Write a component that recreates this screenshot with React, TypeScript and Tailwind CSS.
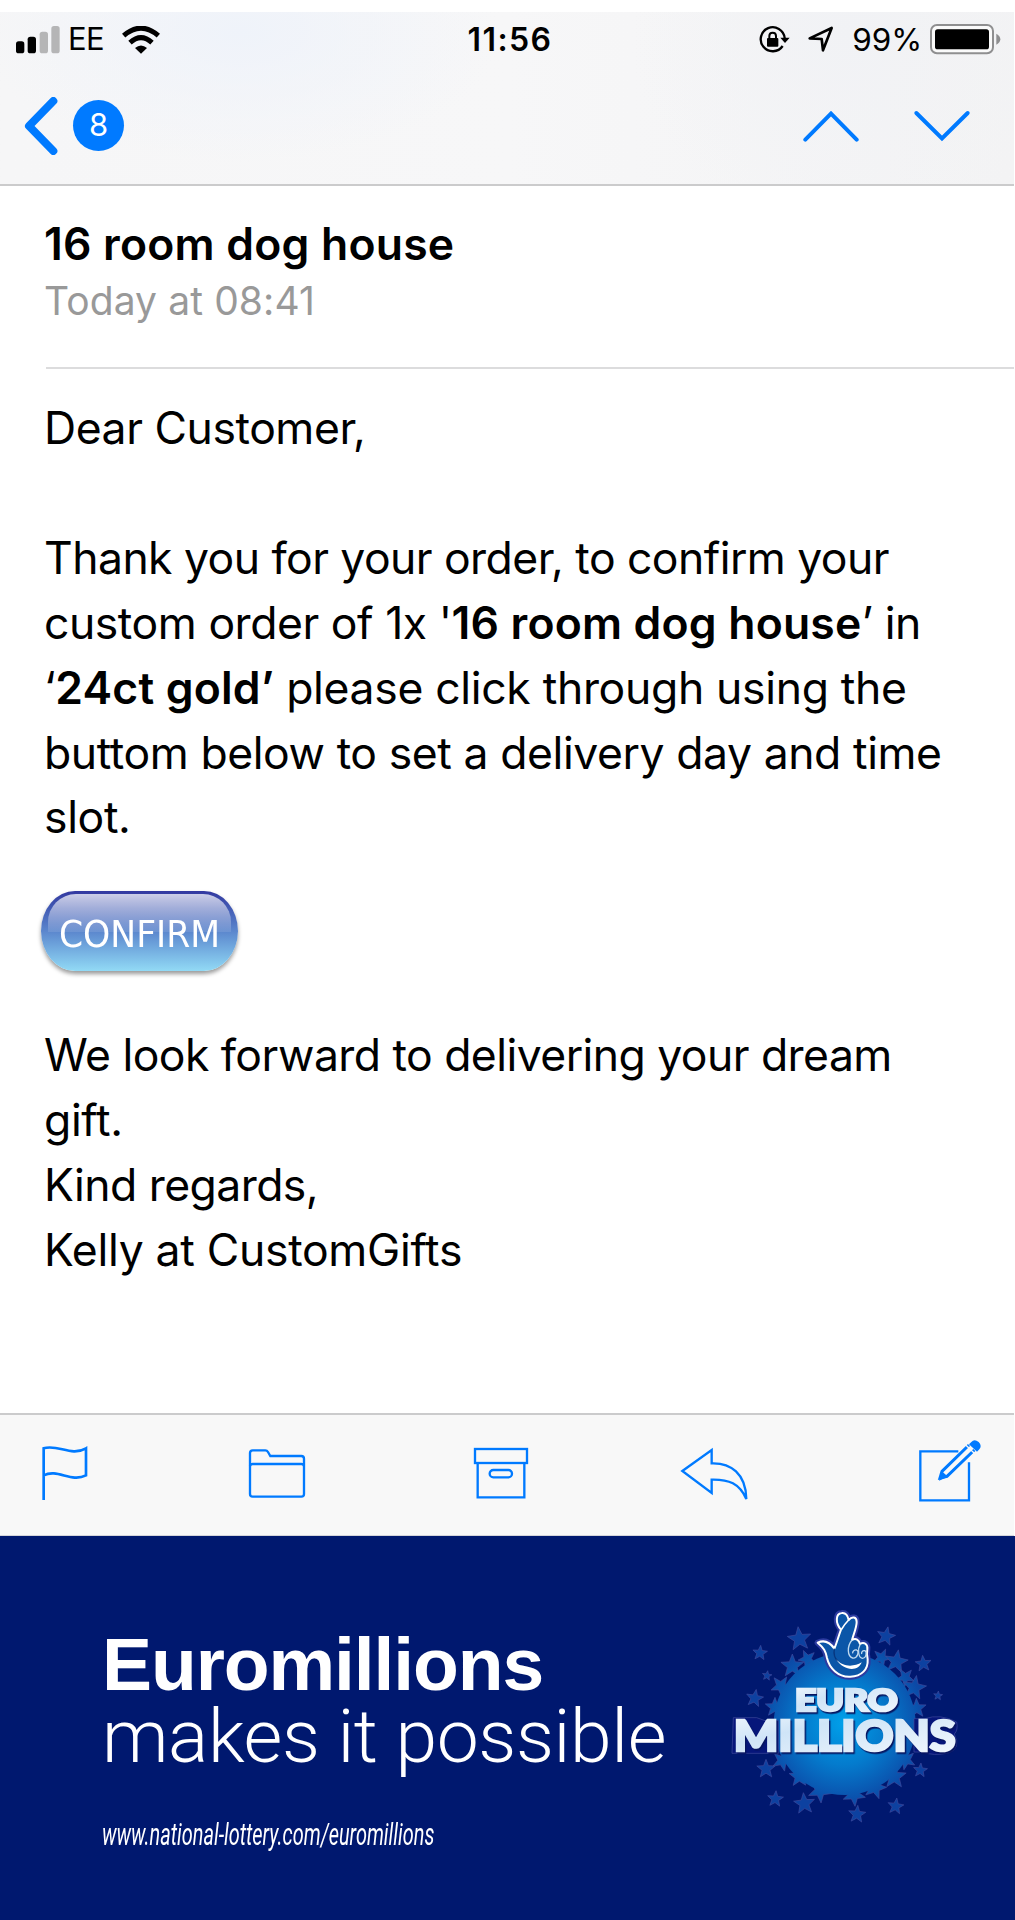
import type { ReactNode } from "react";

const BLUE = "#007aff";

function SignalBars() {
  return (
    <svg width="44" height="28" viewBox="0 0 132 84">
      <rect x="0" y="46" width="25" height="36" rx="8" fill="#000" />
      <rect x="35" y="32" width="25" height="50" rx="8" fill="#000" />
      <rect x="71" y="17" width="25" height="65" rx="8" fill="#b5b5b6" />
      <rect x="106" y="0" width="25" height="82" rx="8" fill="#b5b5b6" />
    </svg>
  );
}

function WifiIcon() {
  return (
    <svg width="38" height="28" viewBox="0 0 114 84" fill="none" stroke="#000">
      <path d="M5 29 Q57 -16 109 29" strokeWidth="15" />
      <path d="M24 50 Q57 20 90 50" strokeWidth="15" />
      <path d="M39 66 Q57 51 75 66 L57 83 Z" fill="#000" stroke="none" />
    </svg>
  );
}

function RotationLock() {
  return (
    <svg width="31" height="28" viewBox="0 0 93 84" fill="none">
      <path d="M71 60 A36 36 0 1 1 77 36" stroke="#000" strokeWidth="7" />
      <path d="M64 35 H92 L78 51 Z" fill="#000" />
      <rect x="24" y="36" width="34" height="26" rx="3" fill="#000" />
      <path d="M31 40 V30 Q31 20 41 20 Q51 20 51 30 V40" stroke="#000" strokeWidth="6" />
    </svg>
  );
}

function LocationArrow() {
  return (
    <svg width="26" height="27" viewBox="0 0 78 81">
      <path
        d="M5 37 L71 6 L45 73 L41 39 Z"
        fill="none"
        stroke="#000"
        strokeWidth="8"
        strokeLinejoin="round"
      />
    </svg>
  );
}

function Battery() {
  return (
    <svg width="71" height="31" viewBox="0 0 213 93" className="shrink-0">
      <rect x="3" y="3" width="186" height="85" rx="18" fill="#fafafa" stroke="#8f8f90" strokeWidth="6" />
      <rect x="15" y="16" width="162" height="60" rx="8" fill="#000" />
      <path d="M199 29 Q211 36 211 46 Q211 56 199 62 Z" fill="#8f8f90" />
    </svg>
  );
}

function StatusBar() {
  return (
    <div className="grid h-[55px] grid-cols-[1fr_auto_1fr] items-center text-black">
      <div className="flex items-center pl-4">
        <SignalBars />
        <span className="ml-2 text-[31px] tracking-[-0.6px]">EE</span>
        <span className="ml-[18px]">
          <WifiIcon />
        </span>
      </div>
      <span className="relative left-[3px] text-[32px] font-semibold tracking-[1.4px]">11:56</span>
      <div className="flex items-center justify-end pr-[13px]">
        <RotationLock />
        <span className="ml-[18px]">
          <LocationArrow />
        </span>
        <span className="mr-2 ml-[18px] text-[31.5px] tracking-[-0.1px]">99%</span>
        <Battery />
      </div>
    </div>
  );
}

function NavBar() {
  return (
    <div className="flex h-[117px] items-center">
      <svg className="ml-[24px]" width="36" height="58" viewBox="0 0 108 174">
        <path
          d="M88 12 L15 87 L88 162"
          fill="none"
          stroke={BLUE}
          strokeWidth="24"
          strokeLinecap="round"
          strokeLinejoin="round"
        />
      </svg>
      <div className="ml-[13px] flex h-[51px] w-[51px] items-center justify-center rounded-full bg-[#007aff] text-[31px] text-white">
        8
      </div>
      <div className="mr-[43px] ml-auto flex gap-[53px]">
        <svg width="58" height="32" viewBox="0 0 174 96">
          <path d="M10 89 L87 11 L164 89" fill="none" stroke={BLUE} strokeWidth="12" strokeLinecap="round" />
        </svg>
        <svg width="58" height="32" viewBox="0 0 174 96">
          <path d="M10 9 L87 85 L164 9" fill="none" stroke={BLUE} strokeWidth="12" strokeLinecap="round" />
        </svg>
      </div>
    </div>
  );
}

function Line({ className = "", children }: { className?: string; children: ReactNode }) {
  return <span className={`block whitespace-nowrap ${className}`}>{children}</span>;
}

function ConfirmButton() {
  return (
    <button className="relative ml-[-3px] flex h-[80px] w-[197px] items-center justify-center rounded-[34px/40px] bg-linear-to-b from-[#3338a0] via-[#5b86cd] to-[#92daf5] shadow-[0_3px_4px_rgba(0,0,0,0.4)]">
      <span className="absolute top-[3px] right-[7px] left-[7px] h-[38px] rounded-t-[28px] bg-linear-to-b from-white/75 to-white/10" />
      <span className="relative top-[3px] scale-x-[0.91] font-['DejaVu_Sans',sans-serif] text-[38px] text-white">
        CONFIRM
      </span>
    </button>
  );
}

function Toolbar() {
  return (
    <div className="mr-px flex h-[123px] items-start border-t-2 border-b border-t-[#cbcbcc] border-b-[#d5d5da] bg-[#f8f8f8]">
      <svg className="mt-[30px] ml-[41px]" width="48" height="56" viewBox="0 0 144 168" fill="none" stroke={BLUE} strokeWidth="8">
        <path d="M8 165 V10 C50 -4 90 36 135 10 V91 C90 114 50 70 8 91" />
      </svg>
      <svg className="mt-[33px] ml-[159px]" width="58" height="51" viewBox="0 0 174 153" fill="none" stroke={BLUE} strokeWidth="7">
        <path d="M6 138 V15 Q6 7 14 7 H52 Q57 7 60 12 L67 24 H160 Q168 24 168 32 V138 Q168 146 160 146 H14 Q6 146 6 138 Z" />
        <path d="M6 54 Q7 48 14 48 H160 Q167 48 168 54" />
      </svg>
      <svg className="mt-[32px] ml-[167px]" width="56" height="53" viewBox="0 0 168 159" fill="none" stroke={BLUE} strokeWidth="7">
        <rect x="6" y="6" width="156" height="42" />
        <path d="M14 48 V151 H154 V48" />
        <rect x="50" y="69" width="67" height="22" rx="11" />
      </svg>
      <svg className="mt-[32px] ml-[151px]" width="69" height="54" viewBox="0 0 207 162" fill="none" stroke={BLUE} strokeWidth="7">
        <path d="M7 72 L95 9 V49 C152 47 198 80 199 156 C178 109 147 97 95 98 V138 Z" />
      </svg>
      <svg className="mt-[24px] ml-[169px]" width="65" height="66" viewBox="0 0 195 198" fill="none" stroke={BLUE} strokeWidth="7">
        <path d="M121 37 H7 V184 H153 V70" />
        <path d="M153 18 L72 97 L66 117 L87 112 L169 33" strokeWidth="9" />
        <path d="M70 95 L90 113 L63 125 Z" fill={BLUE} stroke="none" />
        <path d="M160 9 Q169 -2 182 9 Q193 20 184 31 L177 38 L153 16 Z" fill={BLUE} stroke="none" />
        <path d="M144 19 L172 46" stroke="#f8f8f8" strokeWidth="4" />
      </svg>
    </div>
  );
}

function starPoints(cx: number, cy: number, r: number, turn: number) {
  return Array.from({ length: 10 }, (_, i) => {
    const radius = i % 2 ? r * 0.43 : r;
    const a = ((turn - 90 + i * 36) * Math.PI) / 180;
    return `${(cx + radius * Math.cos(a)).toFixed(1)},${(cy + radius * Math.sin(a)).toFixed(1)}`;
  }).join(" ");
}

// x, y, radius, rotation
const looseStars = [
  [268, 147, 37, -6], [150, 189, 23, 5], [171, 257, 15, 8], [134, 325, 27, 10],
  [528, 139, 29, 12], [640, 221, 25, -5], [684, 317, 14, 5], [168, 537, 29, 0],
  [196, 627, 25, 5], [283, 641, 33, -5], [441, 673, 27, 5], [557, 649, 25, 8], [631, 541, 22, 5],
];

const rimStars = [
  [247, 228, 36, 0], [292, 207, 28, -25], [213, 288, 32, -40], [194, 352, 30, -70],
  [515, 203, 28, 25], [559, 215, 36, 10], [586, 262, 28, 40], [613, 293, 37, 10],
  [620, 355, 30, 70], [217, 512, 32, -120], [268, 560, 32, -145], [330, 602, 37, 175],
  [432, 614, 35, 175], [495, 593, 35, 160], [553, 560, 37, 145], [588, 510, 30, 120],
];

function EuroMillionsLogo() {
  const lettering = {
    lengthAdjust: "spacingAndGlyphs" as const,
    fontFamily: "Lato, sans-serif",
    fontWeight: 900,
    fill: "url(#letters)",
    stroke: "url(#letters)",
    strokeWidth: 8,
  };

  return (
    <svg width="270" height="250" viewBox="0 0 810 750">
      <defs>
        <radialGradient id="globe" gradientUnits="userSpaceOnUse" cx="400" cy="400" r="250">
          <stop offset="0" stopColor="#00a0ea" />
          <stop offset="0.5" stopColor="#047bcd" />
          <stop offset="0.85" stopColor="#0a57b1" />
          <stop offset="1" stopColor="#0c48a5" />
        </radialGradient>
        <linearGradient id="letters" x1="0" y1="0" x2="1" y2="1">
          <stop offset="0" stopColor="#f4f9fe" />
          <stop offset="0.35" stopColor="#cfe4f7" />
          <stop offset="1" stopColor="#f4f9fe" />
        </linearGradient>
      </defs>

      <g fill="#0d41a0" stroke="#3f4a9d" strokeWidth="2">
        {looseStars.map(([x, y, r, turn]) => (
          <polygon key={`${x}-${y}`} points={starPoints(x, y, r, turn)} />
        ))}
      </g>
      <g fill="url(#globe)" stroke="#3f4a9d" strokeWidth="2">
        {rimStars.map(([x, y, r, turn]) => (
          <polygon key={`${x}-${y}`} points={starPoints(x, y, r, turn)} />
        ))}
      </g>
      <circle cx="404" cy="402" r="213" fill="url(#globe)" />

      {/* dark plates where the long word runs over the rim */}
      <path d="M70 383 H140 L165 392 H205 V490 H66 Z" fill="#06167a" stroke="#3f4a9d" strokeWidth="2" />
      <path
        d="M612 386 H645 Q690 370 740 396 Q745 420 733 432 Q755 476 715 489 Q670 499 638 486 H612 Z"
        fill="#06167a"
        stroke="#3f4a9d"
        strokeWidth="2"
      />

      {/* crossed fingers */}
      <path
        d="M323 158 C345 148 362 160 373 176 C380 160 385 140 393 119 C375 98 377 71 395 69 C409 67 414 80 416 90 C426 78 440 80 440 96 C440 112 431 132 426 150 C438 143 447 150 450 162 C462 154 474 163 472 178 C470 188 470 196 473 208 C475 238 455 259 421 260 C385 262 358 235 351 204 C347 183 342 174 323 158 Z"
        fill="#0a1c80"
        stroke="#2c3ba0"
        strokeWidth="18"
        strokeLinejoin="round"
      />
      <path
        d="M323 158 C345 148 362 160 373 176 C380 160 385 140 393 119 C375 98 377 71 395 69 C409 67 414 80 416 90 C426 78 440 80 440 96 C440 112 431 132 426 150 C438 143 447 150 450 162 C462 154 474 163 472 178 C470 188 470 196 473 208 C475 238 455 259 421 260 C385 262 358 235 351 204 C347 183 342 174 323 158 Z"
        fill="#0b56a8"
        stroke="#fff"
        strokeWidth="6"
        strokeLinejoin="round"
      />
      <path d="M416 90 C408 98 401 106 394 119" fill="none" stroke="#fff" strokeWidth="5" />
      <path d="M373 176 C370 195 374 205 383 213" fill="none" stroke="#07367f" strokeWidth="4" />
      <path
        d="M426 150 C410 170 412 199 428 204 C443 206 448 184 440 180 C433 178 427 184 428 190"
        fill="none"
        stroke="#bfd9ef"
        strokeWidth="4"
      />
      <path
        d="M450 164 C442 178 445 203 457 205 C470 205 471 184 464 182 C457 181 454 187 455 192"
        fill="none"
        stroke="#bfd9ef"
        strokeWidth="4"
      />
      <path d="M378 208 C399 232 432 231 455 217 C446 245 402 245 378 208 Z" fill="#fff" />

      <g className="drop-shadow-[4px_5px_1px_#06145f]">
        <text {...lettering} x="255" y="364" fontSize="92" textLength="308">
          EURO
        </text>
        <text {...lettering} x="71" y="482" fontSize="127" textLength="666">
          MILLIONS
        </text>
      </g>
    </svg>
  );
}

function AdBanner() {
  return (
    <div className="flex h-[384px] bg-[#00186f] text-white">
      <div className="w-[710px] pt-[92px] pl-[102px] whitespace-nowrap">
        <p className="font-['Liberation_Sans',sans-serif] text-[75px] leading-[72px] font-bold tracking-[-1.1px]">
          Euromillions
        </p>
        <p className="font-[Roboto,sans-serif] text-[75px] leading-[72px] font-light tracking-[-0.4px]">
          makes it possible
        </p>
        <p className="mt-[43px] origin-left scale-x-[0.643] font-[Roboto,sans-serif] text-[31px] leading-[40px] italic">
          www.national-lottery.com/euromillions
        </p>
      </div>
      <div className="pt-[54px]">
        <EuroMillionsLogo />
      </div>
    </div>
  );
}

export default function App() {
  return (
    <div className="flex h-[1920px] w-[1015px] flex-col overflow-hidden bg-white pt-3 font-[Inter,sans-serif] text-black">
      <header className="mr-px h-[174px] border-b-2 border-[#cbcbcc] bg-linear-to-r from-[#f6f6f7] via-[#f7f7f8] to-[#f3f3f4]">
        <div className="h-full bg-[radial-gradient(ellipse_260px_130px_at_240px_20px,#eff3fa,transparent),radial-gradient(ellipse_220px_200px_at_850px_20px,#f1f2f5,transparent)]">
          <StatusBar />
          <NavBar />
        </div>
      </header>

      <main className="h-[1227px] pl-[44px]">
        <h1 className="pt-[29px] text-[44.5px] leading-[58px] font-semibold tracking-[0.2px] whitespace-nowrap">
          16 room dog house
        </h1>
        <p className="pt-px text-[39px] leading-[54px] tracking-[0.1px] whitespace-nowrap text-[#999]">
          Today at 08:41
        </p>
        <hr className="mt-[39px] mr-px ml-0.5 border-t-2 border-[#dcdcdd]" />

        <div className="pt-[27px] text-[44.5px] leading-[64.9px]">
          <Line className="tracking-[-0.45px]">Dear Customer,</Line>
          <div className="mt-[64.9px]">
            <Line className="tracking-[-0.55px]">Thank you for your order, to confirm your</Line>
            <Line className="tracking-[-0.45px]">
              custom order of 1x '<b className="font-semibold tracking-[0.17px]">16 room dog house</b>’ in
            </Line>
            <Line className="tracking-[-0.32px]">
              ‘<b className="font-semibold tracking-[0.17px]">24ct gold’</b> please click through using the
            </Line>
            <Line className="tracking-[-0.42px]">buttom below to set a delivery day and time</Line>
            <Line className="tracking-[-0.35px]">slot.</Line>
          </div>
        </div>

        <div className="mt-[41px]">
          <ConfirmButton />
        </div>

        <div className="mt-[52px] text-[44.5px] leading-[64.9px]">
          <Line className="tracking-[-0.55px]">We look forward to delivering your dream</Line>
          <Line className="tracking-[-0.35px]">gift.</Line>
          <Line className="tracking-[-0.55px]">Kind regards,</Line>
          <Line className="tracking-[-0.3px]">Kelly at CustomGifts</Line>
        </div>
      </main>

      <Toolbar />
      <AdBanner />
    </div>
  );
}
